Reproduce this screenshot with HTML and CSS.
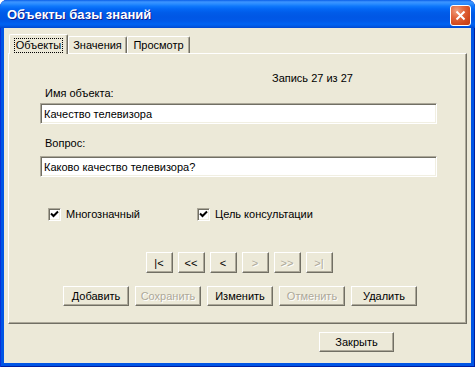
FILE: index.html
```html
<!DOCTYPE html>
<html lang="ru">
<head>
    <meta charset="UTF-8">
    <title>Объекты базы знаний</title>
    <link rel="stylesheet" href="styles.css">
</head>
<body>

<div class="window">
    <!-- Title bar -->
    <div class="titlebar">
        <span class="title">Объекты базы знаний</span>
        <button class="close-x" title="Закрыть">
            <svg width="11" height="11" viewBox="0 0 11 11">
                <path d="M1.5 1.5 L9.5 9.5 M9.5 1.5 L1.5 9.5" stroke="#fff" stroke-width="2" fill="none"/>
            </svg>
        </button>
    </div>

    <div class="client">
        <!-- Tabs -->
        <div class="tabs">
            <div class="tab active"><span class="focus">Объекты</span></div>
            <div class="tab">Значения</div>
            <div class="tab">Просмотр</div>
        </div>

        <div class="panel">
            <div class="record">Запись 27 из 27</div>

            <label class="field-label label-name">Имя объекта:</label>
            <input class="field field-name" type="text" value="Качество телевизора">

            <label class="field-label label-question">Вопрос:</label>
            <input class="field field-question" type="text" value="Каково качество телевизора?">

            <div class="checks">
                <label class="check check-multi">
                    <span class="box">
                        <svg width="9" height="9" viewBox="0 0 9 9"><path d="M1 3.5 L3.5 6 L8 1.5" stroke="#000" stroke-width="2" fill="none"/></svg>
                    </span>
                    Многозначный
                </label>
                <label class="check">
                    <span class="box">
                        <svg width="9" height="9" viewBox="0 0 9 9"><path d="M1 3.5 L3.5 6 L8 1.5" stroke="#000" stroke-width="2" fill="none"/></svg>
                    </span>
                    Цель консультации
                </label>
            </div>

            <!-- Record navigation -->
            <div class="nav">
                <button class="btn nav-btn">|&lt;</button>
                <button class="btn nav-btn">&lt;&lt;</button>
                <button class="btn nav-btn">&lt;</button>
                <button class="btn nav-btn" disabled>&gt;</button>
                <button class="btn nav-btn" disabled>&gt;&gt;</button>
                <button class="btn nav-btn" disabled>&gt;|</button>
            </div>

            <!-- Record actions -->
            <div class="actions">
                <button class="btn act-btn">Добавить</button>
                <button class="btn act-btn" disabled>Сохранить</button>
                <button class="btn act-btn">Изменить</button>
                <button class="btn act-btn" disabled>Отменить</button>
                <button class="btn act-btn">Удалить</button>
            </div>
        </div>

        <div class="footer">
            <button class="btn close-btn">Закрыть</button>
        </div>
    </div>
</div>

</body>
</html>
```

FILE: styles.css
```css
* {
    margin: 0;
    padding: 0;
    box-sizing: border-box;
}

body {
    font-family: 'Liberation Sans', Arial, sans-serif;
    font-size: 11px;
    color: #000;
    background: #fff;
}

.window {
    width: 475px;
    height: 367px;
    display: flex;
    flex-direction: column;
    background: #0055e5;
    border-radius: 7px 7px 0 0;
    box-shadow: inset 1px 0 #0831d9, inset -1px 0 #001ea0, inset 0 -1px #001ea0;
}

/* Title bar */
.titlebar {
    height: 28px;
    display: flex;
    align-items: center;
    justify-content: space-between;
    padding: 0 4px 0 7px;
    border-radius: 7px 7px 0 0;
    background: linear-gradient(to bottom,
        #0a5fe8 0%, #3d95ff 7%, #2a8cff 14%, #0f78fb 22%,
        #0367f5 32%, #005ce9 45%, #0057e5 60%, #0058e8 75%,
        #0062f2 86%, #0059e6 93%, #0047cf 100%);
}

.title {
    color: #fff;
    font-weight: bold;
    font-size: 13px;
    text-shadow: 1px 1px #0f1e8f;
    margin-top: 1px;
}

.close-x {
    width: 21px;
    height: 21px;
    margin-top: 3px;
    border: 1px solid #fff;
    border-radius: 3px;
    background: radial-gradient(circle at 30% 25%, #f0a080 0%, #e3693f 35%, #d24a1e 70%, #c13c14 100%);
    display: flex;
    align-items: center;
    justify-content: center;
}

/* Client area */
.client {
    flex: 1;
    margin: 0 4px 4px 4px;
    background: #ece9d8;
    padding: 6px 4px 0 4px;
    display: flex;
    flex-direction: column;
}

.tabs {
    display: flex;
    align-items: flex-end;
    height: 19px;
    padding-left: 1px;
    position: relative;
    z-index: 1;
}

.tab {
    height: 17px;
    padding-top: 2px;
    text-align: center;
    border-top: 1px solid #fff;
    border-left: 1px solid #fff;
    border-right: 1px solid #716f64;
    box-shadow: inset -1px 0 #aca899;
    border-radius: 2px 2px 0 0;
    background: #ece9d8;
}

.tab:nth-child(2) {
    width: 59px;
}

.tab:nth-child(3) {
    width: 63px;
}

.tab.active {
    width: 59px;
    height: 20px;
    margin-bottom: -1px;
    padding-top: 3px;
}

.focus {
    display: inline-block;
    border: 1px dotted #000;
    padding: 0 1px;
    line-height: 13px;
}

.panel {
    height: 271px;
    border-top: 1px solid #fff;
    border-left: 1px solid #fff;
    border-right: 1px solid #716f64;
    border-bottom: 1px solid #716f64;
    box-shadow: inset -1px -1px #aca899;
    padding: 0 28px 0 31px;
    display: flex;
    flex-direction: column;
    align-items: flex-start;
}

.record {
    margin-top: 18px;
    padding-left: 232px;
    line-height: 13px;
}

.field-label {
    padding-left: 5px;
    line-height: 13px;
}

.label-name {
    margin-top: 2px;
}

.label-question {
    margin-top: 13px;
}

.field {
    width: 397px;
    height: 21px;
    font-family: inherit;
    font-size: 11px;
    padding: 0 3px;
    border: 1px solid;
    border-color: #aca899 #fff #fff #aca899;
    box-shadow: inset 1px 1px #716f64, inset -1px -1px #f1efe2;
    background: #fff;
    outline: none;
}

.field-name {
    margin-top: 3px;
}

.field-question {
    margin-top: 6px;
}

.checks {
    display: flex;
    margin-top: 31px;
    padding-left: 8px;
}

.check {
    display: flex;
    align-items: center;
    gap: 5px;
    line-height: 13px;
}

.check-multi {
    width: 149px;
}

.box {
    width: 13px;
    height: 13px;
    border: 1px solid;
    border-color: #aca899 #fff #fff #aca899;
    box-shadow: inset 1px 1px #716f64, inset -1px -1px #f1efe2;
    background: #fff;
    display: flex;
    align-items: center;
    justify-content: center;
}

/* Buttons */
.btn {
    font-family: inherit;
    font-size: 11px;
    color: #000;
    background: #ece9d8;
    border: 1px solid;
    border-color: #fff #716f64 #716f64 #fff;
    box-shadow: inset -1px -1px #aca899;
}

.btn:disabled {
    color: #aca899;
    text-shadow: 1px 1px #fff;
}

.nav {
    align-self: stretch;
    display: flex;
    justify-content: center;
    gap: 5px;
    margin-top: 31px;
}

.nav-btn {
    width: 27px;
    height: 21px;
}

.actions {
    align-self: stretch;
    display: flex;
    justify-content: center;
    gap: 6px;
    margin-top: 13px;
    padding-left: 2px;
}

.act-btn {
    width: 66px;
    height: 20px;
}

.footer {
    display: flex;
    justify-content: flex-end;
    padding-right: 73px;
    margin-top: 8px;
}

.close-btn {
    width: 75px;
    height: 20px;
}
```
